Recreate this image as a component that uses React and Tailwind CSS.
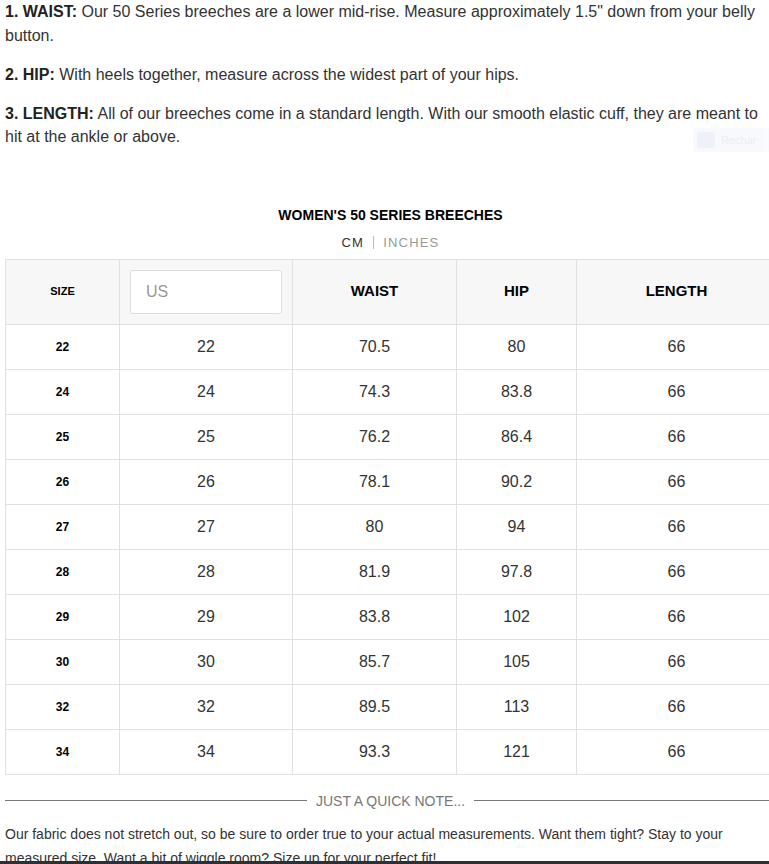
import React from "react";

const rows = [
  ["22", "22", "70.5", "80", "66"],
  ["24", "24", "74.3", "83.8", "66"],
  ["25", "25", "76.2", "86.4", "66"],
  ["26", "26", "78.1", "90.2", "66"],
  ["27", "27", "80", "94", "66"],
  ["28", "28", "81.9", "97.8", "66"],
  ["29", "29", "83.8", "102", "66"],
  ["30", "30", "85.7", "105", "66"],
  ["32", "32", "89.5", "113", "66"],
  ["34", "34", "93.3", "121", "66"],
];

export default function App() {
  return (
    <div className="relative h-[864px] w-[769px] overflow-hidden bg-white font-['Liberation_Sans',Arial,sans-serif] text-[#333]">
      <div className="w-[776px] pl-[5px]">
        {/* === Measuring guide === */}
        <div className="w-[760px] text-[16px] leading-[23.5px]">
          <p className="mb-[15.5px]">
            <b className="text-[#222]">1. WAIST:</b> Our 50 Series breeches are a lower mid-rise. Measure approximately 1.5" down from your belly button.
          </p>
          <p className="mb-[15.5px]">
            <b className="text-[#222]">2. HIP:</b> With heels together, measure across the widest part of your hips.
          </p>
          <p>
            <b className="text-[#222]">3. LENGTH:</b> All of our breeches come in a standard length. With our smooth elastic cuff, they are meant to hit at the ankle or above.
          </p>
        </div>

        {/* === Chart title === */}
        <h2 className="mt-[57px] text-center text-[14px] font-bold leading-[18px] text-black">
          WOMEN'S 50 SERIES BREECHES
        </h2>
        <div className="mt-[11px] flex items-center justify-center gap-[9px] text-[13px] leading-[16px] tracking-[1.2px]">
          <span className="text-[#333]">CM</span>
          <span className="h-[13px] w-px bg-[#bbb]" />
          <span className="text-[#999]">INCHES</span>
        </div>

        {/* === Size table === */}
        <table className="mt-[8px] w-[771px] table-fixed border-collapse">
          <colgroup>
            <col className="w-[114px]" />
            <col className="w-[173px]" />
            <col className="w-[164px]" />
            <col className="w-[120px]" />
            <col className="w-[200px]" />
          </colgroup>
          <thead>
            <tr className="h-[65px] bg-[#f7f7f7]">
              <th className="border border-[#e1e1e1] text-[11px] font-bold text-black">SIZE</th>
              <th className="border border-[#e1e1e1] px-[10px]">
                <div className="flex h-[44px] items-center rounded-[3px] border border-[#ddd] bg-white px-[15px] text-[16px] font-normal text-[#999]">
                  US
                </div>
              </th>
              <th className="border border-[#e1e1e1] text-[15px] font-bold text-black">WAIST</th>
              <th className="border border-[#e1e1e1] text-[15px] font-bold text-black">HIP</th>
              <th className="border border-[#e1e1e1] text-[15px] font-bold text-black">LENGTH</th>
            </tr>
          </thead>
          <tbody>
            {rows.map((r) => (
              <tr key={r[0]} className="h-[45px]">
                <td className="border border-[#e1e1e1] text-center text-[12px] font-bold text-black">{r[0]}</td>
                {r.slice(1).map((v, i) => (
                  <td key={i} className="border border-[#e1e1e1] text-center text-[16px] text-[#333]">
                    {v}
                  </td>
                ))}
              </tr>
            ))}
          </tbody>
        </table>

        {/* === Quick note === */}
        <div className="mt-[18px] flex items-center gap-[9px]">
          <div className="h-px flex-1 bg-[#777]" />
          <span className="text-[14px] leading-[16px] text-[#777]">JUST A QUICK NOTE...</span>
          <div className="h-px flex-1 bg-[#777]" />
        </div>
        <p className="mt-[13px] w-[760px] text-[14px] leading-[24px] text-[#333]">
          Our fabric does not stretch out, so be sure to order true to your actual measurements. Want them tight? Stay to your measured size. Want a bit of wiggle room? Size up for your perfect fit!
        </p>
      </div>

      {/* faint floating badge */}
      <div className="absolute left-[693px] top-[128px] flex h-[24px] w-[76px] items-center gap-[6px] overflow-hidden rounded-l-[3px] bg-[#f3f6fc] px-[4px] opacity-60">
        <div className="h-[16px] w-[18px] shrink-0 rounded-[2px] bg-[#e3e9f6]" />
        <span className="text-[11px] text-[#dde3ef]">Rechar</span>
      </div>

      {/* bottom bar */}
      <div className="absolute bottom-0 left-0 h-[3px] w-full bg-[#2b3034]" />
    </div>
  );
}
